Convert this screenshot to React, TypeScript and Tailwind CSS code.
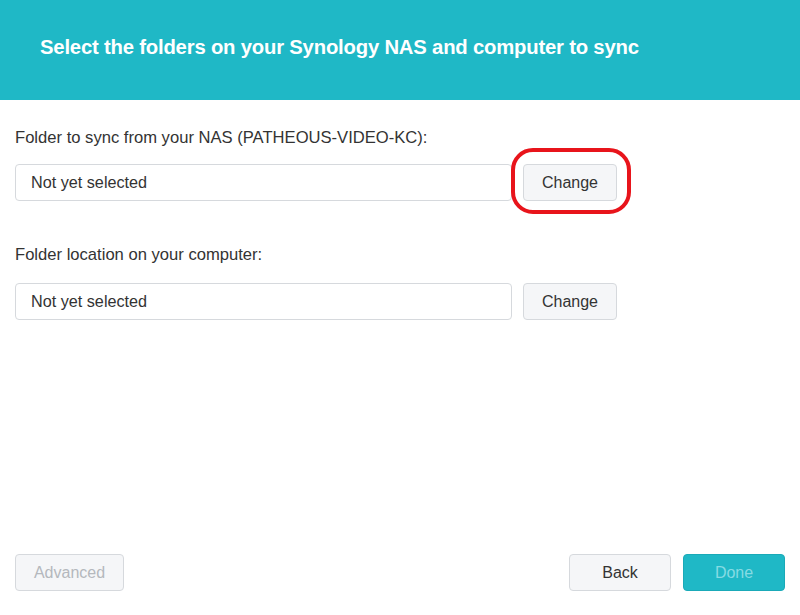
import React from "react";

interface FolderRowProps {
	label: string;
	value: string;
	highlight?: boolean;
	className?: string;
}

function FolderRow({ label, value, highlight, className }: FolderRowProps) {
	return (
		<div>
			<p className="text-[16.6px] leading-[18px] text-[#333]">{label}</p>
			<div className={`flex items-center ${className ?? "mt-[17px]"}`}>
				<div className="w-[497px] h-[37px] border border-[#d6d9dd] rounded-[4px] bg-white flex items-center pl-[15px] text-[16.2px] text-[#333]">
					{value}
				</div>
				<div className="relative ml-[11px]">
					<button className="w-[94px] h-[37px] border border-[#d6d9dd] rounded-[4px] bg-[#f5f6f8] text-[16px] text-[#333]">
						Change
					</button>
					{highlight && (
						<div className="absolute left-[-12px] top-[-16px] w-[120px] h-[66px] border-[4px] border-[#e8141b] rounded-[22px] pointer-events-none" />
					)}
				</div>
			</div>
		</div>
	);
}

export default function App() {
	return (
		<div
			className="w-[800px] h-[615px] bg-white flex flex-col"
			style={{ fontFamily: '"Liberation Sans", Arial, sans-serif' }}
		>
			<div className="h-[100px] bg-[#1fb8c6] flex items-center pl-[40px] pb-[6px]">
				<h1 className="text-white font-bold text-[20.3px] tracking-[-0.2px]">
					Select the folders on your Synology NAS and computer to sync
				</h1>
			</div>
			<div className="flex-1 px-[15px] pt-[29px] flex flex-col">
				<FolderRow
					label="Folder to sync from your NAS (PATHEOUS-VIDEO-KC):"
					value="Not yet selected"
					highlight
				/>
				<div className="mt-[45px]">
					<FolderRow
						label="Folder location on your computer:"
						value="Not yet selected"
						className="mt-[19px]"
					/>
				</div>
				<div className="mt-auto mb-[24px] flex items-center">
					<button className="w-[109px] h-[37px] border border-[#d6d9dd] rounded-[4px] bg-[#f5f6f8] text-[16px] text-[#b4b8bd]">
						Advanced
					</button>
					<button className="ml-auto w-[102px] h-[37px] border border-[#d6d9dd] rounded-[4px] bg-[#f5f6f8] text-[16px] text-[#333]">
						Back
					</button>
					<button className="ml-[12px] w-[102px] h-[37px] border border-[#1aaab8] rounded-[4px] bg-[#1fb8c6] text-[16px] text-[#86dbe3]">
						Done
					</button>
				</div>
			</div>
		</div>
	);
}
